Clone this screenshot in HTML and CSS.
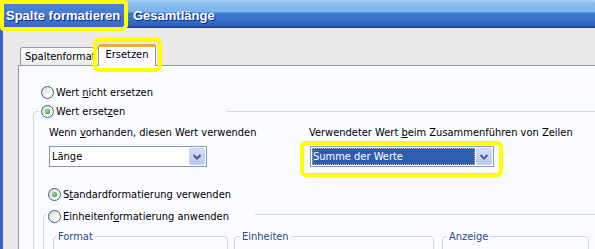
FILE: index.html
```html
<!DOCTYPE html>
<html lang="de">
<head>
<meta charset="utf-8">
<title>Spalte formatieren</title>
<link rel="stylesheet" href="styles.css">
</head>
<body>
<div class="win">
  <div class="titlebar">
    <span class="title-hl">Spalte formatieren</span>
    <span class="title-rest">Gesamtlänge</span>
  </div>
  <div class="client">
    <div class="tabs">
      <div class="tab">Spaltenformat</div>
      <div class="tab active">Ersetzen</div>
    </div>
    <div class="panel">
      <div class="opt first"><span class="radio"></span><span>Wert <u>n</u>icht ersetzen</span></div>
      <fieldset class="grp g1">
        <legend class="lg1"><span class="opt"><span class="radio on"></span><span>Wert erset<u>z</u>en</span></span></legend>
        <div class="cols">
          <div class="col">
            <div class="lbl">Wenn <u>v</u>orhanden, diesen Wert verwenden</div>
            <div class="combo c1">
              <span class="val">Länge</span>
              <span class="btn"><svg width="14" height="15" viewBox="0 0 14 15"><path d="M3.5 6 L7 9.5 L10.5 6" fill="none" stroke="#4A5E85" stroke-width="2"/></svg></span>
            </div>
          </div>
          <div class="col">
            <div class="lbl">Verwendeter Wert <u>b</u>eim Zusammenführen von Zeilen</div>
            <div class="hlwrap">
              <div class="combo c2">
                <span class="val sel">Summe der Werte</span>
                <span class="btn"><svg width="14" height="15" viewBox="0 0 14 15"><path d="M3.5 6 L7 9.5 L10.5 6" fill="none" stroke="#4A5E85" stroke-width="2"/></svg></span>
              </div>
            </div>
          </div>
        </div>
        <div class="opt std"><span class="radio on"></span><span>S<u>t</u>andardformatierung verwenden</span></div>
        <fieldset class="grp g2">
          <legend class="lg2"><span class="opt"><span class="radio"></span><span>Einheitenf<u>o</u>rmatierung anwenden</span></span></legend>
          <div class="boxes">
            <fieldset class="grp box b-fmt"><legend>Format</legend></fieldset>
            <fieldset class="grp box b-ein"><legend>Einheiten</legend></fieldset>
            <fieldset class="grp box b-anz"><legend>Anzeige</legend></fieldset>
          </div>
        </fieldset>
      </fieldset>
    </div>
  </div>
</div>
</body>
</html>
```
FILE: styles.css
```css
* { box-sizing: border-box; }
html, body { margin: 0; padding: 0; }
body {
  width: 595px;
  height: 249px;
  overflow: hidden;
  background: #EBE8EC;
  font-family: "DejaVu Sans Condensed", "DejaVu Sans", sans-serif;
  font-size: 11px;
  color: #000;
}
u { text-decoration: underline; text-underline-offset: 1px; }
.win { width: 595px; height: 249px; overflow: hidden; }

.titlebar {
  height: 28px;
  display: flex;
  align-items: flex-start;
  background: linear-gradient(to bottom,
    #A9D2F5 0px, #8CBFEF 3px, #7AB2EA 12px,
    #3B7AD1 13px, #3571CB 20px, #2D5DB9 26px,
    #243E8E 27px, #243E8E 28px);
  font-family: "Liberation Sans", Arial, sans-serif;
  font-weight: bold;
  font-size: 13px;
  color: #fff;
  text-shadow: 1px 1px 0 #0C2A78;
}
.title-hl {
  position: relative;
  z-index: 3;
  width: 128px;
  height: 31px;
  border: 4px solid #FFFF00;
  border-radius: 0 4px 6px 4px;
  background: linear-gradient(#4C84D6, #3769C4);
  padding-left: 2px;
  display: flex;
  align-items: center;
  white-space: nowrap;
}
.title-rest {
  margin-left: 5px;
  height: 28px;
  padding-top: 3px;
  display: flex;
  align-items: center;
  white-space: nowrap;
}

.client {
  height: 221px;
  border-left: 3px solid #3463C6;
  padding: 16px 0 0 15px;
}
.tabs {
  display: flex;
  align-items: flex-end;
  height: 21px;
  padding-left: 2px;
  position: relative;
  z-index: 2;
}
.tab {
  width: 79px;
  height: 18px;
  border: 1px solid #919B9C;
  border-bottom: none;
  border-radius: 3px 3px 0 0;
  background: linear-gradient(#FEFEFE, #ECEBEF);
  padding-left: 4px;
  line-height: 17px;
  white-space: nowrap;
}
.tab.active {
  position: relative;
  width: 58px;
  height: 22px;
  margin-left: -1px;
  margin-bottom: -1px;
  border-top: 3px solid #F1A640;
  background: #FAFBFE;
  padding: 0;
  text-align: center;
  line-height: 16px;
}
.tab.active::after {
  content: "";
  position: absolute;
  left: -6px;
  right: -7px;
  top: -9px;
  bottom: -6px;
  border: 4px solid #FFFF00;
  border-radius: 6px;
}

.panel {
  width: 620px;
  height: 190px;
  border-top: 1px solid #919B9C;
  border-left: 1px solid #919B9C;
  background: #FAFBFE;
  padding: 20px 0 0 14px;
}
.opt {
  display: flex;
  align-items: center;
  height: 13px;
  line-height: 13px;
  white-space: nowrap;
}
.opt.first { margin-left: 8px; }
.radio {
  flex: none;
  position: relative;
  width: 13px;
  height: 13px;
  border-radius: 50%;
  border: 1px solid #3F5C84;
  background: linear-gradient(135deg, #D6D6D2, #FFFFFF 75%);
  margin-right: 2px;
}
.radio.on::after {
  content: "";
  position: absolute;
  left: 3px;
  top: 3px;
  width: 5px;
  height: 5px;
  border-radius: 50%;
  background: radial-gradient(circle at 40% 40%, #A6E8A0, #2DA52D 70%);
}

fieldset.grp {
  margin: 0;
  padding: 0;
  min-width: 0;
  border: 1px solid #D2D5DB;
  border-radius: 4px;
}
fieldset.grp > legend { padding: 0; }
fieldset.g1 {
  width: 620px;
  height: 200px;
  margin-top: 6px;
}
fieldset.grp > legend.lg1 { margin-left: 5px; width: 188px; padding-left: 2px; }

.cols {
  display: grid;
  grid-template-columns: 260px 200px;
  margin: 8px 0 0 15px;
}
.lbl { line-height: 13px; height: 13px; white-space: nowrap; margin-bottom: 7px; }
.combo {
  display: flex;
  height: 21px;
  border: 1px solid #7F9DB9;
  background: #fff;
  padding: 1px;
}
.c1 { width: 158px; }
.c2 { width: 184px; }
.combo .val {
  flex: 1;
  padding-left: 1px;
  line-height: 17px;
  white-space: nowrap;
}
.combo .val.sel {
  background: #2F5DB0;
  color: #fff;
  margin-right: 1px;
  outline: 1px dotted #C9B46A;
  outline-offset: -1px;
}
.combo .btn {
  flex: none;
  width: 16px;
  height: 17px;
  border: 1px solid #C6D4F2;
  border-radius: 2px;
  background: linear-gradient(#D4DFF7, #B7C8EC);
  display: flex;
  align-items: center;
  justify-content: center;
}
.combo .btn svg { display: block; }
.hlwrap { position: relative; margin-left: 1px; width: 184px; }
.hlwrap::after {
  content: "";
  position: absolute;
  left: -10px;
  right: -9px;
  top: -5px;
  bottom: -10px;
  border: 4px solid #FFFF00;
  border-radius: 6px;
}

.opt.std { margin: 21px 0 0 14px; }
fieldset.g2 {
  width: 600px;
  height: 80px;
  margin: 4px 0 0 9px;
}
fieldset.grp > legend.lg2 { margin-left: 2px; width: 209px; padding: 5px 0 0 2px; }

.boxes {
  display: flex;
  margin: 7px 0 0 9px;
}
fieldset.box { height: 40px; flex: none; }
fieldset.box > legend {
  color: #2C4A86;
  line-height: 13px;
  padding: 0 2px;
}
fieldset.b-fmt { width: 175px; }
fieldset.b-fmt > legend { margin-left: 2px; }
fieldset.b-ein { width: 200px; margin-left: 6px; }
fieldset.b-ein > legend { margin-left: 5px; }
fieldset.b-anz { width: 147px; margin-left: 8px; }
fieldset.b-anz > legend { margin-left: 4px; }
```
